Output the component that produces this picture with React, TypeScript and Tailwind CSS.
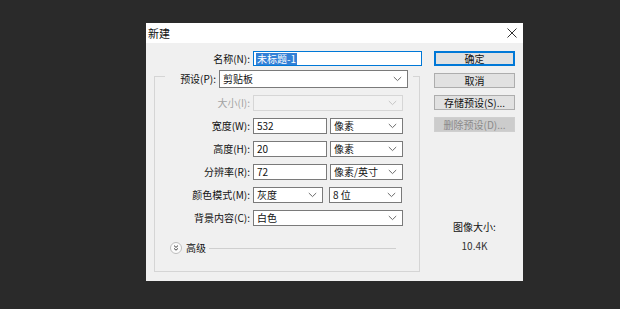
import React from "react";

const FONT = { fontFamily: '"Noto Sans CJK SC", "Noto Sans", sans-serif' };

function Chevron({ disabled }: { disabled?: boolean }) {
  return (
    <svg width="9" height="6" viewBox="0 0 9 6" className="shrink-0">
      <path d="M0.8 1 L4.5 4.6 L8.2 1" fill="none" stroke={disabled ? "#c4c4c4" : "#6b6b6b"} strokeWidth="1" />
    </svg>
  );
}

function Select({ w, h = 16, text, disabled }: { w: string; h?: number; text?: string; disabled?: boolean }) {
  return (
    <div
      className={`${w} flex items-center justify-between pl-[3px] pr-[5px] border ${
        disabled ? "border-[#d6d6d6] bg-[#f2f2f2]" : "border-[#7a7a7a] bg-white"
      }`}
      style={{ height: h }}
    >
      <span className="text-[10px] leading-none text-[#111]">{text}</span>
      <Chevron disabled={disabled} />
    </div>
  );
}

function Input({ w, text }: { w: string; text: string }) {
  return (
    <div className={`${w} h-[16px] flex items-center pl-[3px] border border-[#7a7a7a] bg-white`}>
      <span className="text-[10px] leading-none text-[#111]">{text}</span>
    </div>
  );
}

function Row({ label, children, disabled }: { label: string; children: React.ReactNode; disabled?: boolean }) {
  return (
    <div className="flex items-center h-[16px]">
      <div className={`w-[95px] text-right text-[10px] leading-none ${disabled ? "text-[#a3a3a3]" : "text-[#111]"}`}>{label}</div>
      <div className="ml-[3px] flex items-center gap-[3px]">{children}</div>
    </div>
  );
}

function Button({ text, primary, disabled }: { text: string; primary?: boolean; disabled?: boolean }) {
  return (
    <div
      className={`w-[81px] h-[15px] flex items-center justify-center text-[10px] leading-none border ${
        primary
          ? "border-[#0078d7] bg-[#e1e1e1] text-[#111] shadow-[inset_0_0_0_1px_#0078d7]"
          : disabled
          ? "border-[#cfcfcf] bg-[#cccccc] text-[#8a8a8a]"
          : "border-[#adadad] bg-[#e1e1e1] text-[#111]"
      }`}
    >
      {text}
    </div>
  );
}

export default function App() {
  return (
    <div className="w-[620px] h-[309px] bg-[#2a2a2a] pt-[23px] pl-[146px] overflow-hidden" style={FONT}>
      <div className="w-[377px] h-[258px] bg-[#f0f0f0] flex flex-col">
        <div className="h-[20px] bg-white flex items-center justify-between pl-[2px] pr-[6px]">
          <span className="text-[11px] leading-none text-[#111]">新建</span>
          <svg width="10" height="10" viewBox="0 0 10 10">
            <path d="M0.5 0.5 L9.5 9.5 M9.5 0.5 L0.5 9.5" stroke="#333" strokeWidth="1" />
          </svg>
        </div>
        <div className="flex-1 flex">
          <div className="w-[288px] pt-[8px] flex flex-col">
            <div className="flex items-center h-[15px]">
              <div className="w-[104px] text-right text-[10px] leading-none text-[#111]">名称(N):</div>
              <div className="ml-[3px] w-[169px] h-[15px] flex items-center pl-[2px] border border-[#0078d7] bg-white">
                <span className="bg-[#3380d6] text-white text-[10px] leading-[12px] px-[1px]">未标题-1</span>
              </div>
            </div>
            <div className="mt-[10px] ml-[8px] w-[266px] h-[196px] border border-[#d5d5d5] flex flex-col">
              <div className="-mt-[7px] ml-[10px] w-[248px] h-[18px] bg-[#f0f0f0] flex items-center justify-end pr-[5px] gap-[3px]">
                <span className="text-[10px] leading-none text-[#111]">预设(P):</span>
                <Select w="w-[189px]" h={18} text="剪贴板" />
              </div>
              <div className="mt-[7px] flex flex-col gap-[7px]">
                <Row label="大小(I):" disabled>
                  <Select w="w-[150px]" disabled />
                </Row>
                <Row label="宽度(W):">
                  <Input w="w-[74px]" text="532" />
                  <Select w="w-[73px]" text="像素" />
                </Row>
                <Row label="高度(H):">
                  <Input w="w-[74px]" text="20" />
                  <Select w="w-[73px]" text="像素" />
                </Row>
                <Row label="分辨率(R):">
                  <Input w="w-[74px]" text="72" />
                  <Select w="w-[73px]" text="像素/英寸" />
                </Row>
                <Row label="颜色模式(M):">
                  <Select w="w-[70px]" text="灰度" />
                  <div className="w-0" />
                  <Select w="w-[73px]" text="8 位" />
                </Row>
                <Row label="背景内容(C):">
                  <Select w="w-[150px]" text="白色" />
                </Row>
              </div>
              <div className="mt-[16px] ml-[15px] mr-[23px] flex items-center h-[12px]">
                <svg width="12" height="12" viewBox="0 0 12 12" className="shrink-0">
                  <circle cx="6" cy="6" r="5.5" fill="#fbfbfb" stroke="#bdbdbd" />
                  <path d="M4 3.6 L6 5.4 L8 3.6 M4 6.4 L6 8.2 L8 6.4" fill="none" stroke="#444" strokeWidth="1" />
                </svg>
                <span className="ml-[4px] text-[10px] leading-none text-[#111]">高级</span>
                <div className="ml-[3px] flex-1 h-[1px] bg-[#cfcfcf]" />
              </div>
            </div>
          </div>
          <div className="pt-[8px] w-[81px] flex flex-col">
            <div className="flex flex-col gap-[7px]">
              <Button text="确定" primary />
              <Button text="取消" />
              <Button text="存储预设(S)..." />
              <Button text="删除预设(D)..." disabled />
            </div>
            <div className="mt-[90px] text-center text-[10px] leading-none text-[#111]">图像大小:</div>
            <div className="mt-[9px] text-center text-[10px] leading-none text-[#333]">10.4K</div>
          </div>
        </div>
      </div>
    </div>
  );
}
